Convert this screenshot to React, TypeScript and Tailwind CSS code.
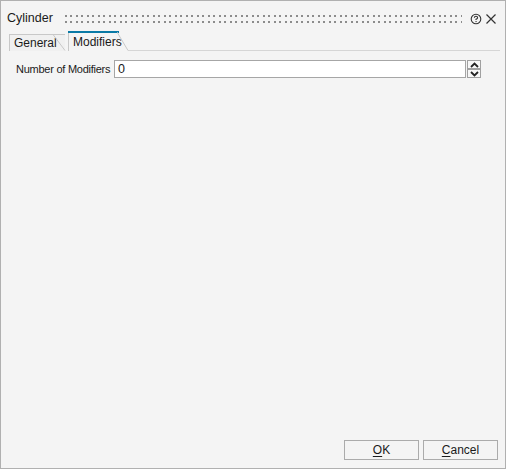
import React from "react";

const font = { fontFamily: '"Liberation Sans", Arial, sans-serif' };

const Grip = () => (
  <svg className="h-[8px] flex-1" preserveAspectRatio="none">
    <defs>
      <pattern id="grip" width="11" height="6" patternUnits="userSpaceOnUse">
        <rect x="0" y="0" width="2" height="2" fill="#8c8c8c" />
        <rect x="5" y="0" width="2" height="2" fill="#8c8c8c" />
      </pattern>
    </defs>
    <rect width="100%" height="8" fill="url(#grip)" />
  </svg>
);

const Spin = ({ up }: { up?: boolean }) => (
  <div className="flex h-[9px] w-[14px] items-center justify-center border border-[#a0a0a0] bg-[#f7f7f7]">
    <svg width="9" height="6" viewBox="0 0 9 6">
      <path
        d={up ? "M1 5 L4.5 1.5 L8 5" : "M1 1 L4.5 4.5 L8 1"}
        fill="none"
        stroke="#222"
        strokeWidth="1.8"
      />
    </svg>
  </div>
);

export default function App() {
  return (
    <div
      className="flex h-[469px] w-[506px] flex-col border border-[#b0b0b0] bg-[#f4f4f4] pt-[5px] text-[12px] text-[#1a1a1a]"
      style={font}
    >
      {/* title bar */}
      <div className="flex h-[25px] items-center pl-[6px] pr-[8px]">
        <span className="mr-[12px] text-[12.5px]">Cylinder</span>
        <Grip />
        <svg className="ml-[8px]" width="12" height="12" viewBox="0 0 12 12">
          <circle cx="6" cy="6" r="4.8" fill="none" stroke="#333" strokeWidth="1.1" />
          <path d="M4.4 4.8 Q4.4 3.3 6 3.3 Q7.6 3.3 7.6 4.7 Q7.6 5.6 6 6.2 L6 7" fill="none" stroke="#333" strokeWidth="1.1" />
          <rect x="5.5" y="8" width="1.1" height="1.1" fill="#333" />
        </svg>
        <svg className="ml-[3px]" width="12" height="12" viewBox="0 0 12 12">
          <path d="M1.5 1.5 L10.5 10.5 M10.5 1.5 L1.5 10.5" stroke="#333" strokeWidth="1.2" />
        </svg>
      </div>

      {/* tabs */}
      <div className="flex h-[20px] items-end pl-[8px] pr-[5px]">
        <div className="relative flex h-[17px] w-[56px] items-center border-l border-t border-[#c8c8c8] bg-[#f0f0f0] pl-[4px]">
          General
          <svg className="absolute right-[-1px] top-[-1px]" width="14" height="17" viewBox="0 0 14 17">
            <path d="M0 0.5 L1 0.5 L13 16.5" fill="none" stroke="#c8c8c8" />
          </svg>
        </div>
        <div className="relative ml-[3px] flex h-[20px] w-[60px] items-center border-l border-[#c8c8c8] bg-[#f4f4f4] pl-[4px]">
          <div className="absolute left-[-1px] top-0 h-[2px] w-[51px] bg-[#0a7aa6]" />
          <span className="mt-[1px]">Modifiers</span>
          <svg className="absolute right-[-1px] top-0" width="12" height="20" viewBox="0 0 12 20">
            <path d="M0 1 L11 19.5" fill="none" stroke="#c8c8c8" />
          </svg>
        </div>
        <div className="h-px flex-1 self-end bg-[#d6d6d6]" />
      </div>

      {/* content */}
      <div className="flex flex-1 flex-col pl-[15px] pr-[24px] pt-[9px]">
        <div className="flex items-center">
          <span className="w-[98px] shrink-0 whitespace-nowrap text-[11px] tracking-[-0.25px]">
            Number of Modifiers
          </span>
          <div className="flex h-[18px] flex-1 items-center border border-[#a6a6a6] bg-white pl-[3px] text-[12.5px]">
            0
          </div>
          <div className="ml-[1px] flex flex-col">
            <Spin up />
            <Spin />
          </div>
        </div>
      </div>

      {/* footer */}
      <div className="flex justify-end gap-[4px] pb-[8px] pr-[7px]">
        <button className="h-[20px] w-[75px] border border-[#ababab] bg-[#f4f4f4] text-[12px]">
          <span className="underline underline-offset-2">O</span>K
        </button>
        <button className="h-[20px] w-[75px] border border-[#ababab] bg-[#f4f4f4] text-[12px]">
          <span className="underline underline-offset-2">C</span>ancel
        </button>
      </div>
    </div>
  );
}
